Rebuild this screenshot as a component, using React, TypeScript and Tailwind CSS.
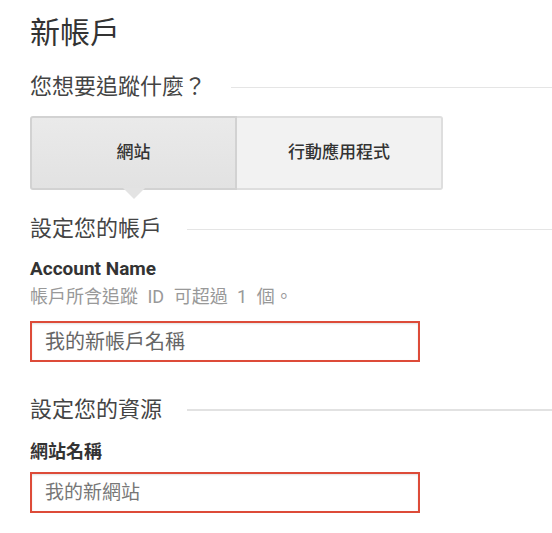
import { useState } from "react"

const cjk = "font-['Roboto','Noto_Sans_CJK_TC',sans-serif]"

function SectionHeading({ text, thick }: { text: string; thick?: boolean }) {
  return (
    <div className="flex items-center">
      <h2 className="text-[22px] leading-[28px] text-[#444] whitespace-nowrap">{text}</h2>
      <div className={`ml-[25px] flex-1 ${thick ? "h-[2px] bg-[#e2e2e2]" : "h-px bg-[#e5e5e5]"}`} />
    </div>
  )
}

export default function App() {
  const [platform, setPlatform] = useState<"web" | "app">("web")

  const options = [
    { key: "web" as const, label: "網站" },
    { key: "app" as const, label: "行動應用程式" }
  ]

  return (
    <div className={`${cjk} w-[552px] h-[533px] bg-white overflow-hidden pl-[30px] pt-[13px]`}>
      <h1 className="text-[30px] leading-[40px] text-[#333]">新帳戶</h1>

      <div className="mt-[20px]">
        <SectionHeading text="您想要追蹤什麼？" />
      </div>

      <div className="mt-[15px] flex w-[413px] h-[74px]">
        {options.map((opt, i) => {
          const active = platform === opt.key
          return (
            <button
              key={opt.key}
              onClick={() => setPlatform(opt.key)}
              className={
                active
                  ? "relative w-[207px] flex items-center justify-center border-2 border-[#d2d2d2] rounded-l-[3px] bg-gradient-to-b from-[#eaeaea] to-[#e2e2e2] text-[17px] font-medium text-[#333]"
                  : `relative flex-1 flex items-center justify-center border-2 border-[#dedede] ${i === 0 ? "border-r-0 rounded-l-[3px]" : "border-l-0 rounded-r-[3px]"} bg-[#f2f2f2] text-[17px] font-medium text-[#333]`
              }
            >
              {opt.label}
              {active && (
                <span className="absolute left-1/2 -translate-x-1/2 top-full w-0 h-0 border-l-[11px] border-r-[11px] border-t-[11px] border-l-transparent border-r-transparent border-t-[#e3e3e3]" />
              )}
            </button>
          )
        })}
      </div>

      <div className="mt-[25px]">
        <SectionHeading text="設定您的帳戶" />
      </div>

      <div className="mt-[15px] text-[19px] leading-[22px] font-bold text-[#333]">Account Name</div>
      <div className="mt-[6px] text-[18px] leading-[22px] text-[#999] [word-spacing:5px]">帳戶所含追蹤 ID 可超過 1 個。</div>
      <input
        autoFocus
        placeholder="我的新帳戶名稱"
        className="mt-[13px] block w-[390px] h-[41px] border-2 border-[#dd4b39] px-[13px] text-[20px] text-[#333] caret-[#333] placeholder:text-[#666] outline-none shadow-[inset_0_1px_2px_rgba(0,0,0,0.12)]"
      />

      <div className="mt-[34px]">
        <SectionHeading text="設定您的資源" thick />
      </div>

      <div className="mt-[16px] text-[18px] leading-[24px] font-bold text-[#333]">網站名稱</div>
      <input
        placeholder="我的新網站"
        className="mt-[8px] block w-[390px] h-[41px] border-2 border-[#dd4b39] px-[13px] text-[19px] text-[#333] placeholder:text-[#777] outline-none shadow-[inset_0_1px_2px_rgba(0,0,0,0.12)]"
      />
    </div>
  )
}
